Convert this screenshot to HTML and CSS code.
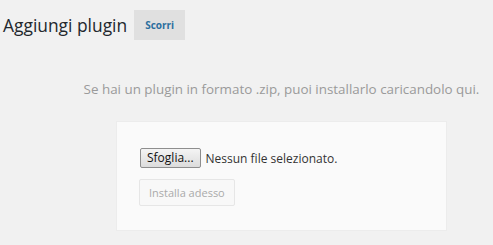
FILE: index.html
```html
<!DOCTYPE html>
<html lang="it">
<head>
<meta charset="utf-8">
<title>Aggiungi plugin</title>
<link rel="stylesheet" href="styles.css">
</head>
<body>
<div class="wrap">
  <div class="header">
    <h1 class="title">Aggiungi plugin</h1>
    <a class="browse">Scorri</a>
  </div>
  <div class="upload">
    <p class="help">Se hai un plugin in formato .zip, puoi installarlo caricandolo qui.</p>
    <form class="form">
      <div class="file-row">
        <span class="file-btn">Sfoglia...</span>
        <span class="file-name">Nessun file selezionato.</span>
      </div>
      <span class="install">Installa adesso</span>
    </form>
  </div>
</div>
</body>
</html>
```
FILE: styles.css
```css
html, body {
  margin: 0;
  padding: 0;
  background: #f1f1f1;
  font-family: "Open Sans", "Noto Sans", sans-serif;
}
.wrap {
  width: 493px;
  height: 245px;
  overflow: hidden;
}
.header {
  display: flex;
  align-items: center;
  padding: 10px 0 0 3px;
  height: 30px;
}
.title {
  margin: 0;
  font-size: 17.4px;
  font-weight: 400;
  color: #23282d;
  line-height: 30px;
}
.browse {
  margin-left: 7px;
  width: 51px;
  height: 30px;
  background: #e0e0e0;
  color: #2c6f9e;
  font-size: 10px;
  font-weight: 700;
  display: flex;
  align-items: center;
  justify-content: center;
}
.upload {
  padding-left: 70px;
  display: flex;
  flex-direction: column;
  align-items: center;
}
.help {
  margin: 40px 0 0;
  font-size: 13.4px;
  color: #9a9a9a;
  line-height: 18px;
}
.form {
  margin-top: 23px;
  background: #fafafa;
  border: 1px solid #ececec;
  padding: 26px 0 0 23px;
  box-sizing: border-box;
  width: 331px;
  height: 110px;
}
.file-row {
  display: flex;
  align-items: center;
  font-size: 12px;
}
.file-btn {
  border: 1px solid #8e8e8e;
  border-radius: 2px;
  background: linear-gradient(#f4f4f4, #dcdcdc);
  color: #111;
  height: 18px;
  line-height: 18px;
  padding: 0 6px;
  font-size: 12px;
  font-family: "Open Sans", sans-serif;
}
.file-name {
  margin-left: 5px;
  color: #333;
}
.install {
  display: inline-block;
  margin-top: 11px;
  margin-left: -1px;
  border: 1px solid #e6e6e6;
  border-radius: 2px;
  height: 25px;
  line-height: 25px;
  padding: 0 9px;
  font-size: 11px;
  color: #aaa;
  background: #f8f8f8;
}
```
